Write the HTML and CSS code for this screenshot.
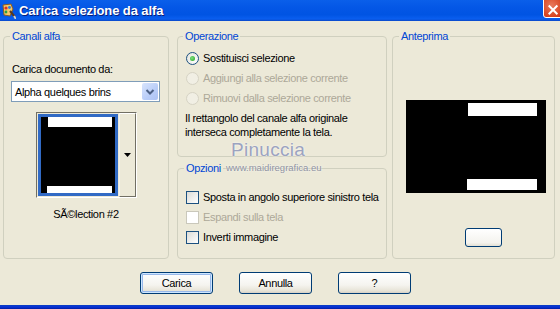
FILE: index.html
```html
<!DOCTYPE html>
<html lang="it">
  <head>
    <meta charset="UTF-8" />
    <meta name="viewport" content="width=device-width, initial-scale=1.0" />
    <title>Carica selezione da alfa</title>
    <link rel="stylesheet" href="styles.css">
  </head>
  <body>
    <div class="xp-window">
      <!-- barra del titolo -->
      <div class="xp-titlebar">
        <svg class="xp-app-icon" width="15" height="16" viewBox="0 0 15 16">
          <path d="M2 2 L10 1 L12 6 L9 13 L3 12 Z" fill="#f3c86a" stroke="#8a5a20" stroke-width="1" />
          <circle cx="5" cy="5" r="1.6" fill="#e03020" />
          <circle cx="8.5" cy="4.5" r="1.4" fill="#2a7de0" />
          <circle cx="5" cy="9" r="1.4" fill="#30a040" />
          <path d="M9 8 L14 14" stroke="#5a3a20" stroke-width="2" />
          <path d="M13 13 L15 16" stroke="#d0d0d0" stroke-width="2" />
        </svg>
        <span class="xp-title">Carica selezione da alfa</span>
        <span class="xp-close">
          <svg width="21" height="21" viewBox="0 0 21 21">
            <path d="M6 8 L14 16 M14 8 L6 16" stroke="#fff" stroke-width="2.2" stroke-linecap="square" />
          </svg>
        </span>
      </div>

      <div class="xp-dialog">
        <div class="dlg-groups">
          <!-- Canali alfa -->
          <div class="grp grp-channels">
            <span class="grp-title">Canali alfa</span>
            <div class="ch-label">Carica documento da:</div>
            <div class="xp-select">
              <span class="xp-select-text">Alpha quelques brins</span>
              <span class="xp-select-btn">
                <svg width="16" height="17" viewBox="0 0 16 17">
                  <path d="M4.5 7 L8 10.5 L11.5 7" fill="none" stroke="#4d6185" stroke-width="2" />
                </svg>
              </span>
            </div>
            <div class="ch-thumb">
              <svg class="ch-thumb-img" width="82" height="84" viewBox="0 0 82 84">
                <rect x="1" y="1" width="80" height="82" fill="#316ac5" />
                <rect x="4" y="4" width="74" height="76" fill="#000" />
                <rect x="11" y="4" width="64" height="10" fill="#fff" />
                <rect x="10" y="73" width="65" height="7" fill="#fff" />
              </svg>
              <span class="ch-thumb-btn">
                <svg width="9" height="5" viewBox="0 0 9 5"><path d="M1 0 H8 L4.5 4 Z" fill="#000" /></svg>
              </span>
            </div>
            <div class="ch-caption">SÃ©lection #2</div>
          </div>

          <div class="dlg-middle">
            <!-- Operazione -->
            <div class="grp grp-op">
              <span class="grp-title">Operazione</span>
              <div class="opt-list">
                <div class="opt-row">
                  <span class="xp-radio is-checked"></span>
                  <span>Sostituisci selezione</span>
                </div>
                <div class="opt-row is-disabled">
                  <span class="xp-radio"></span>
                  <span>Aggiungi alla selezione corrente</span>
                </div>
                <div class="opt-row is-disabled">
                  <span class="xp-radio"></span>
                  <span>Rimuovi dalla selezione corrente</span>
                </div>
              </div>
              <p class="op-note">Il rettangolo del canale alfa originale<br>interseca completamente la tela.</p>
            </div>

            <!-- Opzioni -->
            <div class="grp grp-opt">
              <span class="grp-title">Opzioni</span>
              <div class="opt-list">
                <div class="opt-row">
                  <span class="xp-check"></span>
                  <span>Sposta in angolo superiore sinistro tela</span>
                </div>
                <div class="opt-row is-disabled">
                  <span class="xp-check"></span>
                  <span>Espandi sulla tela</span>
                </div>
                <div class="opt-row">
                  <span class="xp-check"></span>
                  <span>Inverti immagine</span>
                </div>
              </div>
            </div>
          </div>

          <!-- Anteprima -->
          <div class="grp grp-preview">
            <span class="grp-title">Anteprima</span>
            <svg class="pv-image" width="140" height="93" viewBox="0 0 140 93">
              <rect width="140" height="93" fill="#000" />
              <rect x="62" y="3" width="69" height="13" fill="#fff" />
              <rect x="61" y="79" width="70" height="11" fill="#fff" />
            </svg>
            <span class="pv-btn"></span>
          </div>
        </div>

        <div class="dlg-buttons">
          <button class="xp-btn is-default" type="button">Carica</button>
          <button class="xp-btn" type="button">Annulla</button>
          <button class="xp-btn" type="button">?</button>
        </div>

        <!-- filigrana sopra al contenuto -->
        <div class="wm-name">Pinuccia</div>
        <div class="wm-site">www.maidiregrafica.eu</div>
      </div>

      <div class="xp-frame-bottom"></div>
    </div>
  </body>
</html>
```

FILE: styles.css
```css
html,
body {
  margin: 0;
  padding: 0;
  overflow: hidden;
}

body {
  font-family: "Liberation Sans", Arial, sans-serif;
  font-size: 11px;
  letter-spacing: -0.35px;
  color: #000;
  background: #ece9d8;
}

.xp-window {
  width: 560px;
  height: 309px;
  display: flex;
  flex-direction: column;
}

/* barra del titolo */
.xp-titlebar {
  height: 21px;
  flex: none;
  display: flex;
  align-items: center;
  background: linear-gradient(#0a5fea 0%, #0457e6 35%, #0054e3 70%, #0a5eef 90%, #0a48c8 100%);
}

.xp-app-icon {
  margin: 0 3px 0 1px;
  flex: none;
}

.xp-title {
  font-weight: bold;
  font-size: 13px;
  color: #fff;
  text-shadow: 1px 1px 0 #0a1e7a;
  letter-spacing: -0.1px;
}

.xp-close {
  margin-left: auto;
  margin-right: -4px;
  align-self: flex-start;
  margin-top: -3px;
  width: 21px;
  height: 21px;
  box-sizing: border-box;
  border: 1px solid #fff;
  border-radius: 3px;
  background: radial-gradient(circle at 40% 40%, #e87a5c, #d8431f 70%, #c03010);
  display: flex;
}

/* corpo della finestra */
.xp-dialog {
  flex: 1;
  position: relative;
  padding-top: 15px;
}

.dlg-groups {
  display: flex;
  align-items: flex-start;
  padding-left: 3px;
}

.grp {
  box-sizing: border-box;
  border: 1px solid #d0d0bf;
  border-radius: 4px;
  padding: 0 8px;
}

.grp-title {
  display: block;
  width: max-content;
  margin: -7px 0 0 -2px;
  padding: 0 2px;
  line-height: 13px;
  background: #ece9d8;
  color: #0046d5;
}

.grp-channels {
  width: 166px;
  height: 223px;
  margin-right: 8px;
  display: flex;
  flex-direction: column;
}

.ch-label {
  margin-top: 20px;
  line-height: 13px;
}

.xp-select {
  margin: 5px 0 0 -1px;
  width: 149px;
  height: 21px;
  box-sizing: border-box;
  border: 1px solid #7f9db9;
  background: #fff;
  display: flex;
  align-items: center;
}

.xp-select-text {
  flex: 1;
  padding-left: 3px;
}

.xp-select-btn {
  width: 16px;
  height: 17px;
  margin-right: 1px;
  border-radius: 2px;
  background: linear-gradient(135deg, #d8e4fc, #b9cdf8 60%, #aec3f3);
  display: flex;
}

.ch-thumb {
  align-self: center;
  margin-top: 10px;
  width: 101px;
  height: 86px;
  box-sizing: border-box;
  border: 1px solid;
  border-color: #716f64 #fff #fff #716f64;
  display: flex;
}

.ch-thumb-img {
  flex: none;
}

.ch-thumb-btn {
  flex: 1;
  box-sizing: border-box;
  border: 1px solid;
  border-color: #fff #716f64 #716f64 #f5f4ee;
  display: flex;
  align-items: center;
  justify-content: center;
}

.ch-caption {
  margin-top: 10px;
  line-height: 13px;
  text-align: center;
}

/* colonna centrale */
.dlg-middle {
  width: 210px;
  margin-right: 5px;
  display: flex;
  flex-direction: column;
}

.grp-op {
  height: 121px;
  padding: 0 7px;
}

.grp-opt {
  height: 91px;
  margin-top: 11px;
}

.grp-op .opt-list {
  margin-top: 5px;
}

.grp-opt .opt-list {
  margin-top: 12px;
}

.opt-row {
  height: 20px;
  display: flex;
  align-items: center;
  gap: 4px;
  white-space: nowrap;
}

.opt-row.is-disabled {
  color: #aca899;
}

.xp-radio {
  width: 13px;
  height: 13px;
  box-sizing: border-box;
  border: 1px solid #1c5180;
  border-radius: 50%;
  background: radial-gradient(circle at 65% 65%, #fff, #e6e6df 80%);
  display: flex;
  align-items: center;
  justify-content: center;
  margin-left: 1px;
}

.xp-radio.is-checked::after {
  content: "";
  width: 5px;
  height: 5px;
  border-radius: 50%;
  background: radial-gradient(circle at 40% 40%, #7ee07e, #21a121);
}

.is-disabled .xp-radio {
  border-color: #d6d3c4;
  background: #f1efe4;
}

.xp-check {
  flex: none;
  width: 13px;
  height: 13px;
  box-sizing: border-box;
  border: 1px solid #1c5180;
  background: linear-gradient(135deg, #dcdcd7, #fff);
}

.is-disabled .xp-check {
  border-color: #cac8bb;
  background: #fff;
}

.op-note {
  margin: 3px 0 0;
  line-height: 14px;
  white-space: nowrap;
}

/* anteprima */
.grp-preview {
  width: 163px;
  height: 223px;
  display: flex;
  flex-direction: column;
}

.pv-image {
  margin: 57px 0 0 5px;
}

.pv-btn {
  margin: 35px 0 0 64px;
  width: 37px;
  height: 19px;
  box-sizing: border-box;
  border: 1px solid #003c74;
  border-radius: 3px;
  background: linear-gradient(#fff, #f4f3ee 80%, #e3e0d4);
}

/* pulsanti */
.dlg-buttons {
  display: flex;
  gap: 26px;
  padding-left: 140px;
  margin-top: 13px;
}

.xp-btn {
  width: 73px;
  height: 22px;
  padding: 0;
  font: inherit;
  letter-spacing: inherit;
  color: #000;
  border: 1px solid #003c74;
  border-radius: 3px;
  background: linear-gradient(#fff, #f5f4ef 60%, #e6e3d6 90%, #d6d0c5);
}

.xp-btn.is-default {
  box-shadow: inset 0 0 0 1px #cee7ff, inset 0 0 0 2px #98b8ea;
}

/* filigrana */
.wm-name {
  position: absolute;
  left: 231px;
  top: 118px;
  font-size: 19px;
  letter-spacing: 0.3px;
  color: #9ca3bf;
  text-shadow: 0 0 2px #fff;
}

.wm-site {
  position: absolute;
  left: 226px;
  top: 141px;
  font-size: 9.5px;
  letter-spacing: 0;
  color: #8f92a0;
  text-shadow: 0 0 2px #fff;
}

.xp-frame-bottom {
  height: 4px;
  flex: none;
  background: linear-gradient(#0a3fc0, #0831d9 50%, #001ea0);
}
```
